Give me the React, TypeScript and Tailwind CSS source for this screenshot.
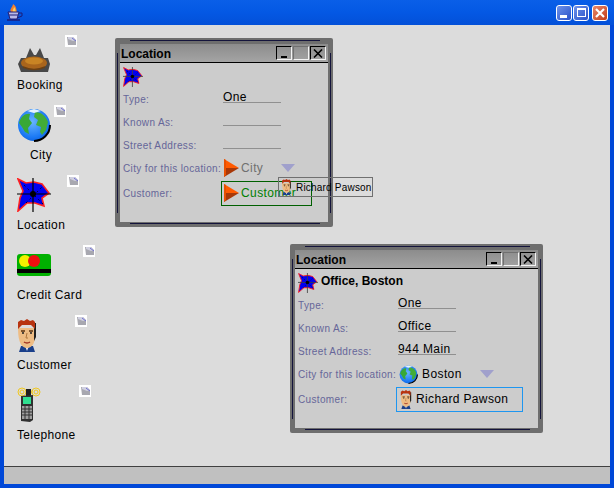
import React from 'react';

const Star = ({ size }: { size: number }) => (
  <svg width={size} height={size} viewBox="0 0 34 34" className="block shrink-0">
    <polygon points="1,1 9,5 17,4 25,6 32,15 25,20 27,28 18,25 10,25 1,33 3,20 6,13" fill="#0000f0" stroke="#ff2020" strokeWidth="1.6" />
    <path d="M7,7 L27,27 M9,25 L25,9" stroke="#000040" strokeWidth="1" strokeDasharray="2 3" />
    <path d="M16,0 V34 M0,16 H34" stroke={size < 30 ? '#404040' : '#000'} strokeWidth={size < 30 ? 1.4 : 1.2} />
    <circle cx="16" cy="16" r="3" fill="#000" />
  </svg>
);

const Globe = ({ size }: { size: number }) => (
  <svg width={size} height={size} viewBox="0 0 34 34" className="block shrink-0">
    <defs>
      <radialGradient id="sea" cx="0.45" cy="0.4" r="0.7">
        <stop offset="0" stopColor="#68b4ff" />
        <stop offset="0.7" stopColor="#1a78f4" />
        <stop offset="1" stopColor="#0a58d0" />
      </radialGradient>
    </defs>
    <circle cx="17" cy="17" r="16" fill="url(#sea)" />
    <path d="M33,17 A16,16 0 0 1 17,33" fill="none" stroke="#000" strokeWidth="2" />
    <path d="M2,15 C4,8 9,5 13,6 L12,11 L15,15 L11,20 L12,26 L8,24 L5,19 Z" fill="#38a838" />
    <path d="M18,4 C24,4 29,8 31,14 L29,22 L25,27 L23,24 L24,19 L19,17 L21,12 L17,9 Z" fill="#42ac38" />
    <path d="M10,3 L17,1 L24,3 L17,5 Z" fill="#e4f4ff" />
  </svg>
);

const Booking = () => (
  <svg width="34" height="30" viewBox="0 0 34 30" className="block">
    <path d="M1,20 L4,14 L9,14 L13,4 L17,11 L19,11 L23,4 L27,14 L31,14 L33,20 L31,28 L4,28 Z" fill="#484848" />
    <ellipse cx="17" cy="19" rx="13" ry="6.5" fill="#a9651c" />
    <ellipse cx="17" cy="17" rx="9" ry="3.5" fill="#c88424" />
    <path d="M6,23 Q17,28 28,23" stroke="#6a4014" strokeWidth="1.5" fill="none" />
  </svg>
);

const CreditCard = () => (
  <svg width="34" height="22" viewBox="0 0 34 22" className="block">
    <rect x="0" y="0" width="34" height="22" rx="3" fill="#00b000" />
    <rect x="0" y="15" width="34" height="4" fill="#000" />
    <circle cx="8" cy="7" r="6" fill="#f4f000" />
    <circle cx="17" cy="7" r="6" fill="#ee1010" />
  </svg>
);

const Face = ({ w, h }: { w: number; h: number }) => (
  <svg width={w} height={h} viewBox="0 0 20 33" className="block shrink-0">
    <path d="M4,27 L16,27 L18,33 L2,33 Z" fill="#1a3f8a" />
    <path d="M8,27 L12,27 L10,32 Z" fill="#e8e8f0" />
    <path d="M1,9 C1,24 5,29 10,29 C15,29 19,24 19,9 Z" fill="#eebc84" />
    <path d="M17,4 L19,4 L19,18 L17,22 Z" fill="#202020" />
    <path d="M1,10 L1,3 L4,1 L7,2 L10,0 L13,2 L16,1 L18,3 L18,10 L14,6 L5,6 Z" fill="#b83410" />
    <path d="M4,12 H8 M12,12 H16" stroke="#5a3010" strokeWidth="1.5" />
    <path d="M5,14 H7 M13,14 H15" stroke="#202020" strokeWidth="1.5" />
    <path d="M10,14 L9,19 H11" stroke="#b07840" fill="none" />
    <path d="M7,23 Q10,25 13,23" stroke="#a03020" strokeWidth="1.5" fill="none" />
  </svg>
);

const Telephone = () => (
  <svg width="26" height="36" viewBox="0 0 26 36" className="block">
    <g fill="none" stroke="#f0c820" strokeWidth="1">
      <circle cx="5" cy="5" r="4" />
      <circle cx="5" cy="5" r="2" />
      <circle cx="19" cy="5" r="4" />
      <circle cx="19" cy="5" r="2" />
      <circle cx="12" cy="5" r="2.5" />
    </g>
    <rect x="9" y="2" width="5" height="7" fill="#202020" />
    <path d="M4,9 L16,8 L16,33 L13,35 L4,34 Z" fill="#303030" />
    <rect x="6" y="10" width="8" height="7" fill="#30e090" />
    <rect x="5" y="19" width="10" height="13" fill="#a0a0a0" />
    <path d="M5,22 H15 M5,25 H15 M5,28 H15 M8,19 V32 M12,19 V32" stroke="#303030" />
  </svg>
);

const MiniDoc = () => (
  <svg width="12" height="12" viewBox="0 0 12 12" className="block">
    <rect width="12" height="12" fill="#fff" />
    <path d="M2,2 H8 L11,5 V10 H3 Z" fill="#a8a8b0" />
    <path d="M3,2 H8 L11,5 L8,6 L3,4 Z" fill="#d0d0e0" />
    <path d="M7,3 L11,6" stroke="#7070d0" />
  </svg>
);

const ClassTriangle = () => (
  <svg width="15" height="18" viewBox="0 0 15 18" className="block shrink-0">
    <polygon points="0,0 15,9 0,9" fill="#ff5a00" />
    <polygon points="0,9 15,9 0,18" fill="#a83808" />
    <polygon points="0,0 2,1 2,16 0,18" fill="#e85000" />
  </svg>
);

const Dropdown = () => (
  <svg width="14" height="8" viewBox="0 0 14 8" className="block">
    <polygon points="0,0 14,0 7,8" fill="#a0a0cc" />
  </svg>
);

const JavaCup = () => (
  <svg width="17" height="18" viewBox="0 0 17 18" className="block">
    <path d="M5,8 C3,5 7,3 7,0 C11,3 10,5 11,8 Z" fill="#f08030" />
    <path d="M7,8 C6,6 8,5 8,3 C10,5 9,6 10,8 Z" fill="#ffd060" />
    <path d="M2,8 H13 L11,15 H4 Z" fill="#b8b8e8" stroke="#1c1c78" />
    <path d="M3,11 H12" stroke="#1c1c78" />
    <path d="M13,9 H16 V12 L11,14" fill="none" stroke="#1c1c78" />
    <path d="M1,16 H14" stroke="#1c1c78" strokeWidth="1.5" />
  </svg>
);

const XpButton = ({ close, children }: { close?: boolean; children: React.ReactNode }) => (
  <div
    className={`w-[16px] h-[16px] rounded-[3px] border border-white flex items-center justify-center ${
      close ? 'bg-gradient-to-br from-[#e8886a] to-[#c03810]' : 'bg-gradient-to-br from-[#6f92ea] to-[#2a50c8]'
    }`}
  >
    {children}
  </div>
);

const FrameButton = ({ children, on }: { children?: React.ReactNode; on?: boolean }) => (
  <div
    className={`w-[16px] h-[14px] flex items-center justify-center border-r border-b border-[#f4f4f4] ${
      on ? 'border-l border-t border-l-black border-t-black' : 'border-l border-t border-l-[#707070] border-t-[#707070]'
    }`}
  >
    {children}
  </div>
);

const labelCls = "pl-[3px] pt-[1px] w-[103px] shrink-0 text-[10px] tracking-[0.35px] text-[#666699]";

const TextField = ({ value }: { value?: string }) => (
  <div className="w-[58px] h-[13px] mb-[4px] border-b border-[#909090] text-[12px] leading-[14px] tracking-[0.4px] text-black whitespace-nowrap">
    {value}
  </div>
);

const Row = ({ label, height, children }: { label: string; height: string; children: React.ReactNode }) => (
  <div className={`flex items-center ${height}`}>
    <div className={labelCls}>{label}</div>
    {children}
  </div>
);

type WinProps = {
  left: string;
  width: string;
  title?: string;
  type: string;
  known?: string;
  street?: string;
  city: React.ReactNode;
  customer: React.ReactNode;
};

const InternalWindow = ({ left, width, title, type, known, street, city, customer }: WinProps) => (
  <div className={`absolute ${left} ${width} h-[189px] bg-[#6e6e6e] rounded-[2px] px-[5px] pt-[6px] pb-[5px]`}>
    {/* navy frame lines */}
    <div className="absolute left-[15px] right-[13px] top-[2px] h-px bg-[#14143c]" />
    <div className="absolute left-[15px] right-[13px] bottom-[3px] h-px bg-[#14143c]" />
    <div className="absolute left-[2px] top-[15px] bottom-[14px] w-px bg-[#14143c]" />
    <div className="absolute right-[2px] top-[15px] bottom-[14px] w-px bg-[#14143c]" />
    <div className="h-full flex flex-col bg-[#cccccc]">
      <div className="h-[19px] shrink-0 flex items-center justify-between pl-[1px] pr-[2px] border-b border-black bg-gradient-to-b from-[#8c8c8c] to-[#a4a4a4]">
        <span className="pt-[1px] text-[12px] font-bold text-black leading-none">Location</span>
        <div className="flex gap-[1px]">
          <FrameButton on>
            <div className="w-[6px] h-[2px] mt-[7px] bg-black" />
          </FrameButton>
          <FrameButton />
          <FrameButton on>
            <svg width="10" height="9" viewBox="0 0 10 9">
              <path d="M1,0.5 L9,8.5 M9,0.5 L1,8.5" stroke="#000" strokeWidth="1.6" />
            </svg>
          </FrameButton>
        </div>
      </div>
      <div className="h-[24px] shrink-0 flex items-center gap-[3px] pl-[3px] pt-[3px]">
        <Star size={20} />
        {title && <span className="mb-[3px] text-[12px] font-bold text-black">{title}</span>}
      </div>
      <Row label="Type:" height="h-[23px]"><TextField value={type} /></Row>
      <Row label="Known As:" height="h-[23px]"><TextField value={known} /></Row>
      <Row label="Street Address:" height="h-[23px]"><TextField value={street} /></Row>
      <Row label="City for this location:" height="h-[24px]">{city}</Row>
      <Row label="Customer:" height="h-[26px]">{customer}</Row>
    </div>
  </div>
);

const items = [
  { name: 'Booking', top: 'top-[19px]', icon: <Booking />, iconH: 'h-[30px]', docLeft: 'left-[61px]', docTop: 'top-[10px]', labelPl: 'pl-0' },
  { name: 'City', top: 'top-[83px]', icon: <Globe size={34} />, iconH: 'h-[34px]', docLeft: 'left-[50px]', docTop: 'top-[80px]', labelPl: 'pl-[13px]' },
  { name: 'Location', top: 'top-[153px]', icon: <Star size={34} />, iconH: 'h-[34px]', docLeft: 'left-[63px]', docTop: 'top-[150px]', labelPl: 'pl-0' },
  { name: 'Credit Card', top: 'top-[229px]', icon: <CreditCard />, iconH: 'h-[22px]', docLeft: 'left-[79px]', docTop: 'top-[220px]', labelPl: 'pl-0' },
  { name: 'Customer', top: 'top-[294px]', icon: <Face w={20} h={33} />, iconH: 'h-[33px]', docLeft: 'left-[71px]', docTop: 'top-[290px]', labelPl: 'pl-0' },
  { name: 'Telephone', top: 'top-[362px]', icon: <Telephone />, iconH: 'h-[36px]', docLeft: 'left-[75px]', docTop: 'top-[360px]', labelPl: 'pl-0' },
];

// label baselines differ per icon, so each tile carries its own gap
const gaps = ['mt-[4px]', 'mt-[6px]', 'mt-[6px]', 'mt-[12px]', 'mt-[6px]', 'mt-[5px]'];

const App: React.FC = () => {
  return (
    <div className="h-screen w-full flex flex-col overflow-hidden bg-[#0048d8] font-['Liberation_Sans',Arial,sans-serif] select-none">
      {/* Title bar */}
      <div className="h-[25px] shrink-0 flex items-center justify-between pl-[6px] pr-[6px] bg-gradient-to-b from-[#0a5fe8] via-[#0458e4] to-[#0350d8]">
        <JavaCup />
        <div className="flex gap-[1px]">
          <XpButton>
            <div className="w-[7px] h-[3px] mt-[7px] -ml-[2px] bg-white" />
          </XpButton>
          <XpButton>
            <div className="w-[9px] h-[9px] border border-t-2 border-white" />
          </XpButton>
          <div className="ml-[2px]">
            <XpButton close>
              <svg width="10" height="10" viewBox="0 0 10 10">
                <path d="M1,1 L9,9 M9,1 L1,9" stroke="#fff" strokeWidth="2.2" />
              </svg>
            </XpButton>
          </div>
        </div>
      </div>

      <div className="flex-1 min-h-0 flex flex-col mx-[4px] mb-[4px]">
        {/* Desktop */}
        <div className="relative flex-1 bg-[#dcdcdc]">
          {items.map((it, i) => (
            <React.Fragment key={it.name}>
              <div className={`absolute left-[13px] ${it.top}`}>
                <div className={it.iconH}>{it.icon}</div>
                <div className={`${gaps[i]} ${it.labelPl} text-[12px] leading-[14px] tracking-[0.35px] text-black whitespace-nowrap`}>
                  {it.name}
                </div>
              </div>
              <div className={`absolute ${it.docLeft} ${it.docTop}`}>
                <MiniDoc />
              </div>
            </React.Fragment>
          ))}

          <div className="absolute inset-0 top-[13px]">
            <InternalWindow
              left="left-[111px]"
              width="w-[218px]"
              type="One"
              city={
                <div className="flex items-center w-[71px] ml-[1px]">
                  <ClassTriangle />
                  <span className="ml-[2px] text-[12px] tracking-[0.4px] text-[#707070]">City</span>
                  <div className="ml-auto"><Dropdown /></div>
                </div>
              }
              customer={
                <div className="-ml-[2px] w-[91px] h-[25px] border border-[#006000] flex items-center pl-[2px] whitespace-nowrap">
                  <ClassTriangle />
                  <span className="ml-[2px] text-[12px] tracking-[0.4px] text-[#008000]">Customer</span>
                </div>
              }
            />
          </div>

          <div className="absolute inset-0 top-[219px]">
            <InternalWindow
              left="left-[286px]"
              width="w-[253px]"
              title="Office, Boston"
              type="One"
              known="Office"
              street="944 Main"
              city={
                <div className="flex items-center w-[95px] ml-[1px]">
                  <Globe size={19} />
                  <span className="ml-[4px] text-[12px] tracking-[0.4px] text-black">Boston</span>
                  <div className="ml-auto"><Dropdown /></div>
                </div>
              }
              customer={
                <div className="-ml-[2px] w-[127px] h-[25px] border border-[#1e96f0] flex items-center pl-[3px]">
                  <Face w={12} h={19} />
                  <span className="ml-[4px] text-[12px] tracking-[0.35px] text-black whitespace-nowrap">Richard Pawson</span>
                </div>
              }
            />
          </div>

          {/* drag ghost */}
          <div className="absolute left-[274px] top-[152px] w-[95px] h-[20px] border border-[#707070] flex items-center pl-[2px]">
            <Face w={11} h={16} />
            <span className="ml-[4px] text-[10px] tracking-[0.2px] text-black whitespace-nowrap">Richard Pawson</span>
          </div>
        </div>

        {/* Status bar */}
        <div className="h-[18px] shrink-0 bg-[#c0c0c0] border-t border-[#404040]" />
      </div>
    </div>
  );
};

export default App;
